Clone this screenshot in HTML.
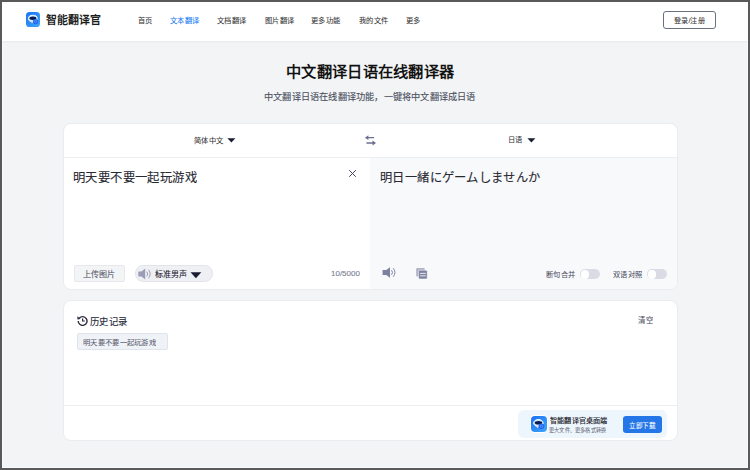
<!DOCTYPE html>
<html lang="zh-CN"><head><meta charset="utf-8">
<style>
*{margin:0;padding:0;box-sizing:border-box}
html,body{width:750px;height:470px;overflow:hidden}
body{font-family:"Liberation Sans",sans-serif;background:#595959;position:relative}
.a{position:absolute;white-space:nowrap;line-height:1}
.t{position:absolute;white-space:nowrap;line-height:1;transform-origin:0 0;transform:scale(.1);-webkit-text-stroke:1.2px currentColor}
#page{position:absolute;left:2px;top:2px;width:746px;height:466px;background:#f3f4f6;overflow:hidden}
#hdr{position:absolute;left:0;top:0;width:746px;height:39px;background:#fff;box-shadow:0 1px 2px rgba(0,0,0,0.05)}
.card{position:absolute;background:#fff;border-radius:8px;border:1px solid #eaecf0}
</style></head><body>
<div id="page" style="box-shadow:inset 1px 0 #f9fafc,inset -1px 0 #f9fafc,inset 0 -1px #f9fafc">
  <div id="hdr"></div>
</div>
<div class="a" style="left:25.6px;top:12.1px;width:14.8px;height:14.8px;border-radius:3.6px;background:linear-gradient(135deg,#1a70f3,#3ea8fb)">
  <svg width="14.8" height="14.8" viewBox="0 0 16 16" style="position:absolute;left:0;top:0">
    <ellipse cx="7.4" cy="7" rx="4.7" ry="3.5" fill="#bfe2ff" stroke="#fff" stroke-width="1"/>
    <path d="M5.1 9.7 L6.5 12.3 L7.9 10.2 Z" fill="#f2dcc0"/>
    <ellipse cx="7.5" cy="6.8" rx="3.8" ry="1.8" fill="#0c1a4a"/>
    <circle cx="10.4" cy="10.3" r="2.8" fill="#1f63f0"/>
    <circle cx="10.4" cy="10.3" r="1.3" fill="none" stroke="#6aa8fa" stroke-width="0.7"/>
  </svg>
</div>
<div class="a" style="left:663px;top:11px;width:53px;height:18px;border:1px solid #6b7080;border-radius:3px;background:#fff"></div>

<!-- card 1 -->
<div class="card" style="left:63px;top:123px;width:615px;height:167px;overflow:hidden">
  <div style="position:absolute;left:0;top:33px;width:615px;height:1px;background:#eceef2"></div>
  <div style="position:absolute;left:306px;top:34px;width:308px;height:131px;background:#f8f9fb"></div>
</div>
<svg class="a" style="left:227px;top:138px" width="9" height="5" viewBox="0 0 9 5"><path d="M0.4 0.2 H8.4 L4.4 4.6 Z" fill="#1b1d33"/></svg>
<svg class="a" style="left:364px;top:134px" width="13" height="13" viewBox="0 0 13 13">
  <path d="M4 3.7 H9.6" stroke="#6c6f91" stroke-width="1.3" fill="none" stroke-linecap="round"/>
  <path d="M0.9 3.7 L4.4 1.3 V6.1 Z" fill="#6c6f91"/>
  <path d="M2.9 9 H9" stroke="#6c6f91" stroke-width="1.3" fill="none" stroke-linecap="round"/>
  <path d="M12 9 L8.5 6.6 V11.4 Z" fill="#6c6f91"/>
</svg>
<svg class="a" style="left:527px;top:138px" width="9" height="5" viewBox="0 0 9 5"><path d="M0.4 0.2 H8.4 L4.4 4.6 Z" fill="#1b1d33"/></svg>
<svg class="a" style="left:348px;top:169px" width="9" height="9" viewBox="0 0 9 9"><path d="M1.2 1.2 L7.8 7.8 M7.8 1.2 L1.2 7.8" stroke="#3a3d55" stroke-width="0.95"/></svg>

<div class="a" style="left:74px;top:265px;width:51px;height:17px;background:#f3f4f6;border:1px solid #e6e8ec;border-radius:2px"></div>
<div class="a" style="left:135px;top:265px;width:78px;height:16.5px;background:#eff0f4;border:1px solid #e2e4ea;border-radius:8.25px"></div>
<svg class="a" style="left:138px;top:268px" width="14" height="12" viewBox="0 0 14 12">
  <path d="M0.3 3.5 H3.5 L7.2 0.5 V11.5 L3.5 8.5 H0.3 Z" fill="#9a9db5"/>
  <path d="M8.8 3.6 Q10.6 6 8.8 8.4" stroke="#9a9db5" stroke-width="1" fill="none"/>
  <path d="M10.6 1.8 Q13.8 6 10.6 10.2" stroke="#9a9db5" stroke-width="1" fill="none"/>
</svg>
<svg class="a" style="left:190px;top:271.5px" width="12" height="7" viewBox="0 0 12 7"><path d="M0.5 0.3 H11.3 L5.9 6.3 Z" fill="#1b1d33"/></svg>

<svg class="a" style="left:382px;top:267px" width="15" height="11" viewBox="0 0 15 11">
  <path d="M0.6 3 H4.3 L8 0.2 V10.8 L4.3 8 H0.6 Z" fill="#7d809e"/>
  <path d="M9.6 3.2 Q11.3 5.5 9.6 7.8" stroke="#7d809e" stroke-width="1" fill="none"/>
  <path d="M11.3 1.3 Q14.6 5.5 11.3 9.7" stroke="#7d809e" stroke-width="1" fill="none"/>
</svg>
<svg class="a" style="left:416px;top:268px" width="12" height="12" viewBox="0 0 12 12">
  <rect x="0.2" y="0" width="8.6" height="8.6" rx="1" fill="#b0b2c5"/>
  <rect x="2.6" y="2.2" width="8.6" height="8.8" rx="1" fill="#7d809e" stroke="#f8f9fb" stroke-width="0.6"/>
  <rect x="4.1" y="4.9" width="5.6" height="0.9" fill="#f8f9fb"/>
  <rect x="4.1" y="7.4" width="5.6" height="0.9" fill="#f8f9fb"/>
</svg>
<div class="a" style="left:579.5px;top:269.3px;width:20.3px;height:10px;border-radius:5px;background:#d9dce4"></div>
<div class="a" style="left:580.5px;top:270.2px;width:8.4px;height:8.4px;border-radius:50%;background:#fff"></div>
<div class="a" style="left:646.5px;top:269.3px;width:20.3px;height:10px;border-radius:5px;background:#d9dce4"></div>
<div class="a" style="left:647.5px;top:270.2px;width:8.4px;height:8.4px;border-radius:50%;background:#fff"></div>

<!-- card 2 -->
<div class="card" style="left:63px;top:300px;width:615px;height:141px;overflow:hidden">
  <div style="position:absolute;left:0;top:103.5px;width:615px;height:1px;background:#eceef2"></div>
</div>
<svg class="a" style="left:76.5px;top:315px" width="11" height="11" viewBox="0 0 11 11">
  <path d="M2.2 3.2 A4.4 4.4 0 1 1 1.2 6" stroke="#2a2d3e" stroke-width="1.4" fill="none"/>
  <path d="M0.4 1.2 L3.6 4 L0.4 4.6 Z" fill="#2a2d3e"/>
  <path d="M5.6 3.4 V6 H7.8" stroke="#2a2d3e" stroke-width="1.2" fill="none"/>
</svg>
<div class="a" style="left:77px;top:333px;width:91px;height:17px;background:#eff2f7;border:1px solid #dfe4ec;border-radius:2px"></div>

<!-- banner -->
<div class="a" style="left:518px;top:410px;width:149px;height:27.5px;background:#eef6fd;border-radius:6px"></div>
<div class="a" style="left:531px;top:416.3px;width:16px;height:16px;border-radius:4px;background:linear-gradient(135deg,#1a70f3,#3ea8fb);box-shadow:0 0 0 1px #fff">
  <svg width="16" height="16" viewBox="0 0 16 16" style="position:absolute;left:0;top:0">
    <ellipse cx="7.4" cy="7" rx="4.7" ry="3.5" fill="#bfe2ff" stroke="#fff" stroke-width="1"/>
    <path d="M5.1 9.7 L6.5 12.3 L7.9 10.2 Z" fill="#f2dcc0"/>
    <ellipse cx="7.5" cy="6.8" rx="3.8" ry="1.8" fill="#0c1a4a"/>
    <circle cx="10.4" cy="10.3" r="2.8" fill="#1f63f0"/>
    <circle cx="10.4" cy="10.3" r="1.3" fill="none" stroke="#6aa8fa" stroke-width="0.7"/>
  </svg>
</div>
<div class="a" style="left:622.5px;top:416px;width:39.5px;height:17px;background:#2577e8;border-radius:3px"></div>

<div class="t" style="left:45.5px;top:15.0px;font-size:110.00px;color:#1b1b1b;font-weight:bold;-webkit-text-stroke:0">智能翻译官</div>
<div class="t" style="left:137.85px;top:16.6px;font-size:73.00px;color:#333;-webkit-text-stroke:0.5px currentColor">首页</div>
<div class="t" style="left:170.1px;top:16.6px;font-size:73.00px;color:#0f78f5;-webkit-text-stroke:0.5px currentColor">文本翻译</div>
<div class="t" style="left:217.1px;top:16.6px;font-size:73.00px;color:#333;-webkit-text-stroke:0.5px currentColor">文档翻译</div>
<div class="t" style="left:265.1px;top:16.6px;font-size:73.00px;color:#333;-webkit-text-stroke:0.5px currentColor">图片翻译</div>
<div class="t" style="left:311.4px;top:16.6px;font-size:73.00px;color:#333;-webkit-text-stroke:0.5px currentColor">更多功能</div>
<div class="t" style="left:358.8px;top:16.6px;font-size:73.00px;color:#333;-webkit-text-stroke:0.5px currentColor">我的文件</div>
<div class="t" style="left:405.8px;top:16.6px;font-size:73.00px;color:#333;-webkit-text-stroke:0.5px currentColor">更多</div>
<div class="t" style="left:673.6px;top:17.1px;font-size:72.00px;color:#333;-webkit-text-stroke:0.5px currentColor">登录/注册</div>
<div class="t" style="left:286.1px;top:63.56px;font-size:153.30px;color:#111;font-weight:bold;-webkit-text-stroke:0">中文翻译日语在线翻译器</div>
<div class="t" style="left:263.7px;top:92.3px;font-size:92.40px;color:#4b5060">中文翻译日语在线翻译功能，一键将中文翻译成日语</div>
<div class="t" style="left:193.6px;top:137.0px;font-size:73.00px;color:#333;-webkit-text-stroke:0.5px currentColor">简体中文</div>
<div class="t" style="left:507.8px;top:135.7px;font-size:73.00px;color:#333;-webkit-text-stroke:0.5px currentColor">日语</div>
<div class="t" style="left:72.9px;top:170.9px;font-size:124.00px;color:#2a2a33">明天要不要一起玩游戏</div>
<div class="t" style="left:380.4px;top:172.0px;font-size:123.50px;color:#2a2a33">明日一緒にゲームしませんか</div>
<div class="t" style="left:83.0px;top:270.2px;font-size:81.00px;color:#5c5f70">上传图片</div>
<div class="t" style="left:154.6px;top:269.86px;font-size:80.00px;color:#1f2030">标准男声</div>
<div class="t" style="left:331.1px;top:268.6px;font-size:80.00px;color:#7d8096">10/5000</div>
<div class="t" style="left:545.6px;top:270.6px;font-size:73.00px;color:#4a4d5e;-webkit-text-stroke:0.5px currentColor">断句合并</div>
<div class="t" style="left:612.6px;top:271.2px;font-size:73.00px;color:#4a4d5e;-webkit-text-stroke:0.5px currentColor">双语对照</div>
<div class="t" style="left:89.7px;top:316.7px;font-size:94.00px;color:#2a2d3e">历史记录</div>
<div class="t" style="left:82.8px;top:339.0px;font-size:73.00px;color:#585b6e;-webkit-text-stroke:0.5px currentColor">明天要不要一起玩游戏</div>
<div class="t" style="left:638.3px;top:316.5px;font-size:75.00px;color:#4a4d5e;-webkit-text-stroke:0.5px currentColor">清空</div>
<div class="t" style="left:549.8px;top:416.7px;font-size:71.80px;color:#2a2a33;font-weight:bold;-webkit-text-stroke:0">智能翻译官桌面端</div>
<div class="t" style="left:548.7px;top:428.0px;font-size:51.70px;color:#6b6e80;-webkit-text-stroke:0.5px currentColor">更大文件、更多格式转换</div>
<div class="t" style="left:629.0px;top:421.9px;font-size:66.00px;color:#fff;-webkit-text-stroke:0.5px currentColor">立即下载</div>
</body></html>
